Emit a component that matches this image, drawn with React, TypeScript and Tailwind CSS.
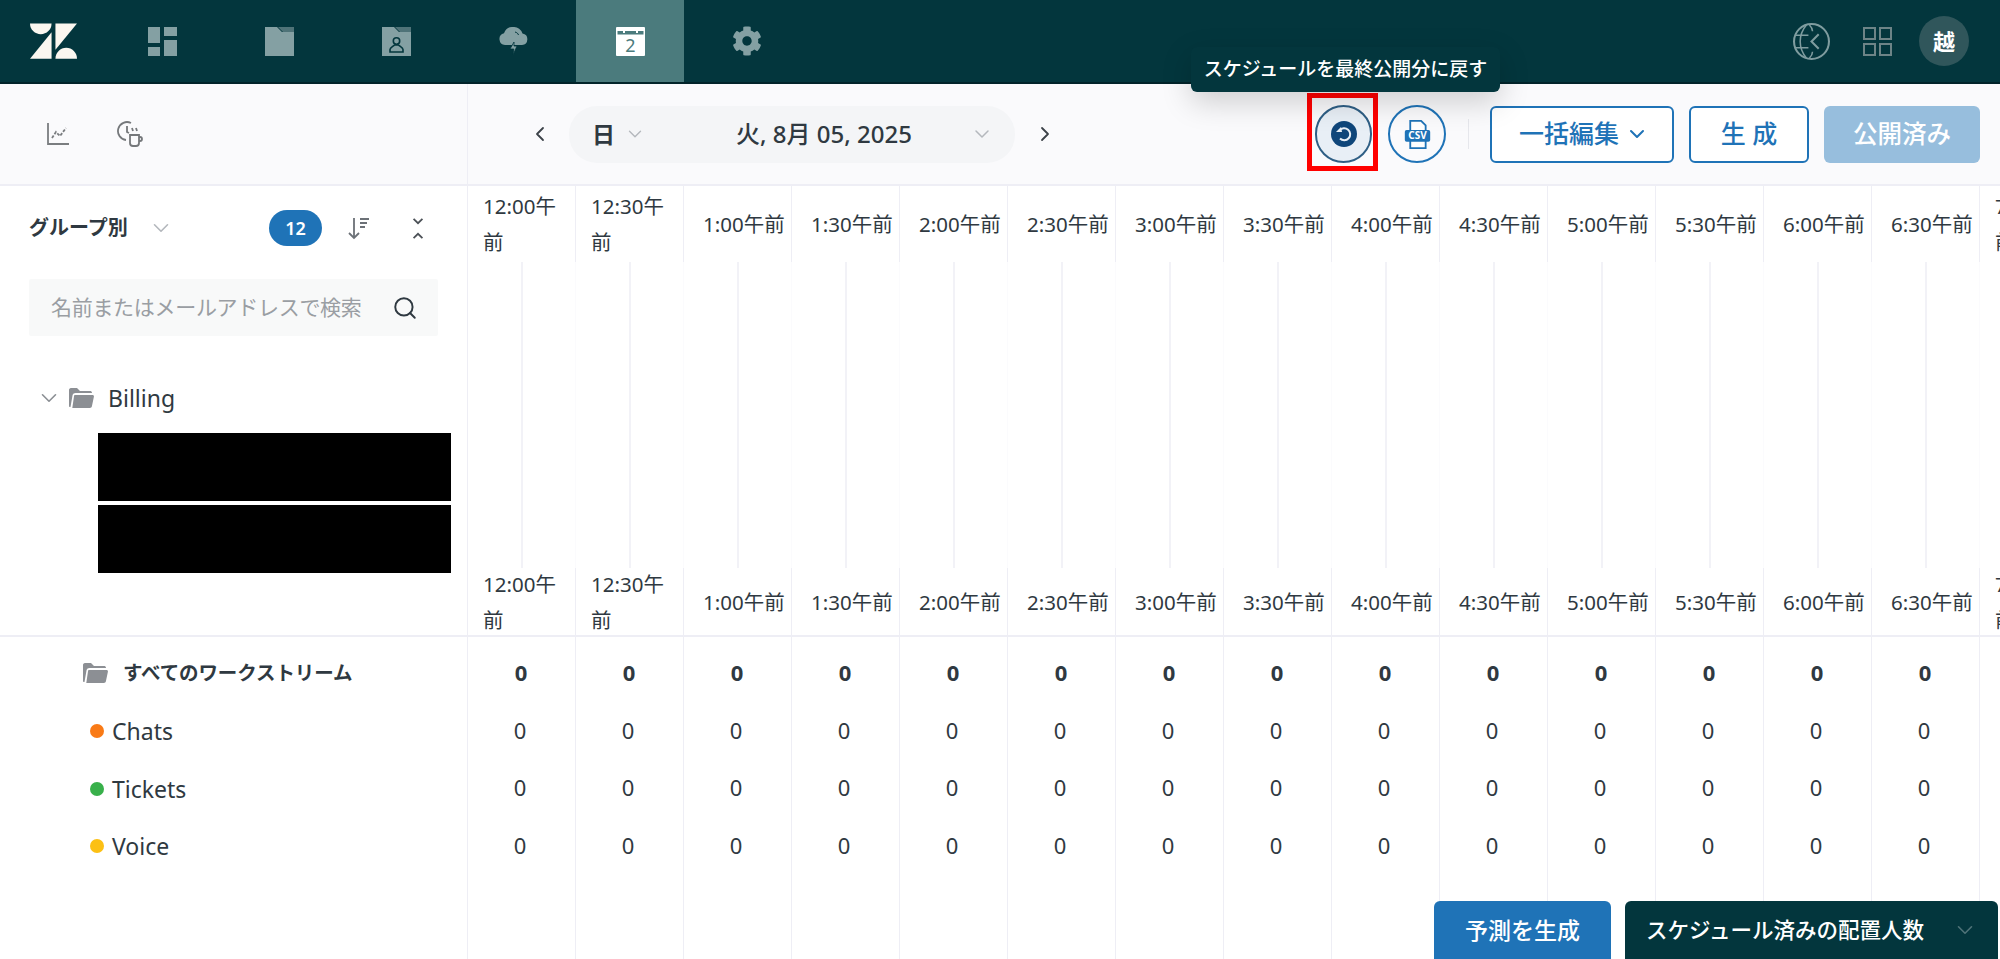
import { ChevronDown, ChevronLeft, ChevronRight, Search } from "lucide-react";
import { FaCog } from "react-icons/fa";

const hours = [
  ["12:00午", "前"],
  ["12:30午", "前"],
  ["1:00午前"],
  ["1:30午前"],
  ["2:00午前"],
  ["2:30午前"],
  ["3:00午前"],
  ["3:30午前"],
  ["4:00午前"],
  ["4:30午前"],
  ["5:00午前"],
  ["5:30午前"],
  ["6:00午前"],
  ["6:30午前"],
  ["7:00午", "前"],
];

const streams = [
  { name: "Chats", dot: "bg-[#f97a16]" },
  { name: "Tickets", dot: "bg-[#38b04a]" },
  { name: "Voice", dot: "bg-[#fcc014]" },
];

const HourLabel = ({ lines }: { lines: string[] }) => (
  <div
    className={`flex h-full flex-col justify-center text-[20.500px] leading-[36px] whitespace-nowrap text-[#2f3941] ${
      lines.length > 1 ? "pl-[15px]" : "pl-[19px]"
    }`}
  >
    {lines.map((line) => (
      <span key={line}>{line}</span>
    ))}
  </div>
);

const FolderOpen = ({ className }: { className: string }) => (
  <svg viewBox="0 0 25 20" className={className} fill="#8c8f94">
    <path d="M0 2c0-1 .6-2 2-2h6l3 3h10c1 0 2 .6 2 2H6.500C5 5 4 5.800 3.600 7L1.500 19H1c-.6 0-1-.5-1-1Z" />
    <path d="M6 7h17.500c1 0 1.600.8 1.400 1.800l-2 9.500c-.2 1-1 1.700-2 1.700H3.300L5 8.200C5.100 7.500 5.400 7 6 7Z" />
  </svg>
);

const NavTab = ({ children, active }: { children: React.ReactNode; active?: boolean }) => (
  <div className={`flex h-full w-[108px] items-center justify-center ${active ? "bg-[#4b7b7d]" : ""}`}>
    {children}
  </div>
);

const TopBar = () => (
  <div className="flex h-[84px] shrink-0 items-center border-b-2 border-[#02242a] bg-[#03363d]">
    <div className="flex w-[108px] justify-center pr-[2px]">
      <svg viewBox="0 0 48 36" className="h-[36px] w-[47px]" fill="#fbf7f0">
        <path d="M0 0H22A11 11 0 0 1 0 0Z" />
        <path d="M22 9V36H0Z" />
        <path d="M26 0H48L26 27Z" />
        <path d="M26 36A11 11 0 0 1 48 36Z" />
      </svg>
    </div>
    <div className="flex h-full gap-[9px]">
      <NavTab>
        <svg viewBox="0 0 29 29" className="h-[29px] w-[29px]" fill="#84a0a3">
          <rect width="12" height="16" />
          <rect y="20" width="12" height="9" />
          <rect x="16" width="13" height="9" />
          <rect x="16" y="13" width="13" height="16" />
        </svg>
      </NavTab>
      <NavTab>
        <svg viewBox="0 0 29 29" className="h-[29px] w-[29px]">
          <path d="M0 0H12L17 5H29V29H0Z" fill="#84a0a3" />
          <path d="M13 0H29V5H18Z" fill="#4f7378" />
        </svg>
      </NavTab>
      <NavTab>
        <svg viewBox="0 0 29 29" className="h-[29px] w-[29px]">
          <path d="M0 0H12L17 5H29V29H0Z" fill="#84a0a3" />
          <path d="M13 0H29V5H18Z" fill="#4f7378" />
          <circle cx="14.500" cy="14" r="3.200" fill="none" stroke="#03363d" strokeWidth="1.600" />
          <path d="M8 25v-2.500c0-2 3-3 4.500-4.500h4c1.500 1.500 4.500 2.500 4.500 4.500V25Z" fill="none" stroke="#03363d" strokeWidth="1.600" />
        </svg>
      </NavTab>
      <NavTab>
        <svg viewBox="0 0 29 28" className="h-[28px] w-[29px]" fill="#84a0a3">
          <path d="M6 18a6 6 0 0 1-1-11.800A9.500 9.500 0 0 1 14.500 0a9 9 0 0 1 9 6.500A5.800 5.800 0 0 1 23 18Z" />
          <path d="M16 5c2 .5 3 1.500 3.500 3" fill="none" stroke="#03363d" strokeWidth="1" />
          <path d="M15 15v4h3l-4 9 .8-6H11Z" stroke="#03363d" strokeWidth=".8" />
        </svg>
      </NavTab>
      <NavTab active>
        <svg viewBox="0 0 29 29" className="h-[29px] w-[29px]">
          <rect width="29" height="29" rx="1" fill="#fff" />
          <rect x="1.500" y="4" width="26" height="3.500" fill="#4b7b7d" />
          <rect x="7" y="0" width="2" height="6" fill="#fff" />
          <rect x="20" y="0" width="2" height="6" fill="#fff" />
          <text x="14.500" y="25" textAnchor="middle" fontSize="18" fill="#4b7b7d">
            2
          </text>
        </svg>
      </NavTab>
      <NavTab>
        <FaCog className="h-[30px] w-[30px] text-[#84a0a3]" />
      </NavTab>
    </div>
    <div className="ml-auto flex items-center pr-[31px]">
      <svg viewBox="0 0 36 36" className="h-[37px] w-[37px]" fill="none" stroke="#7f9c9f" strokeWidth="2">
        <circle cx="18" cy="18" r="17" />
        <path d="M25 11l-7 7 7 7" />
        <path d="M13 2C8 8 7 12 7 18s1 10 6 16M2 12h13M2 24h13M16 2c2 2 3 4 3 6M16 34c2-2 3-4 3-6" strokeWidth="1.500" />
      </svg>
      <svg viewBox="0 0 29 29" className="ml-[33px] h-[29px] w-[29px]" fill="none" stroke="#6d8487" strokeWidth="2">
        <rect x="1" y="1" width="11" height="11" />
        <rect x="17" y="1" width="11" height="11" />
        <rect x="1" y="17" width="11" height="11" />
        <rect x="17" y="17" width="11" height="11" />
      </svg>
      <div className="ml-[27px] flex h-[50px] w-[50px] items-center justify-center rounded-full bg-[#30565b] text-[22px] font-bold text-white">
        越
      </div>
    </div>
  </div>
);

const Toolbar = () => (
  <div className="flex h-[102px] shrink-0 border-b-2 border-[#eeeef5] bg-[#fafafc]">
    <div className="flex w-[468px] shrink-0 items-center border-r border-[#eeeef5] pl-[47px]">
      <svg viewBox="0 0 22 22" className="h-[22px] w-[22px]" fill="none" stroke="#7a7d80" strokeWidth="1.800">
        <path d="M1 0v21h21" />
        <path d="M5 15l4-6 4 4 6-8" strokeDasharray="3 1.500" />
      </svg>
      <svg viewBox="0 0 26 26" className="ml-[48px] h-[26px] w-[26px]" fill="none" stroke="#75787b" strokeWidth="1.800">
        <path d="M14 2A9 9 0 1 0 9 19" />
        <path d="M10 5v6l2 1" />
        <path d="M13 14h9v8a3 3 0 0 1-3 3h-3a3 3 0 0 1-3-3Z" />
        <path d="M22 16h1a2 2 0 0 1 0 4h-1" />
        <path d="M15 7l1 3M19 7l1 3" />
      </svg>
    </div>
    <div className="flex flex-1 items-center pr-[20px] pl-[60px]">
      <ChevronLeft className="h-[24px] w-[24px] text-[#3c4248]" strokeWidth={1.800} />
      <div className="ml-[17px] flex h-[57px] w-[446px] items-center rounded-[28px] bg-[#f4f5f7] pr-[21px] pl-[23px] text-[24px] font-medium text-[#2f3941]">
        <span className="w-[20px] text-[23px] font-bold">日</span>
        <ChevronDown className="ml-[12px] h-[22px] w-[22px] text-[#b4b8bd]" strokeWidth={1.500} />
        <span className="flex-1 pl-[32px] text-center whitespace-nowrap">火, 8月 05, 2025</span>
        <ChevronDown className="h-[24px] w-[24px] text-[#b4b8bd]" strokeWidth={1.500} />
      </div>
      <ChevronRight className="ml-[18px] h-[24px] w-[24px] text-[#3c4248]" strokeWidth={1.800} />

      <div className="relative ml-auto">
        <div className="absolute top-[-58px] left-[-124px] z-10 flex h-[45px] w-[309px] items-center justify-center rounded-[6px] bg-[#03363d] text-[19px] font-medium whitespace-nowrap text-white shadow-[0_10px_30px_rgba(0,0,0,0.18)]">
          スケジュールを最終公開分に戻す
        </div>
        <div className="absolute top-[-12px] left-[-8px] h-[78px] w-[71px] border-[5px] border-[#ff0000]" />
        <button className="flex h-[58px] w-[57px] items-center justify-center rounded-full border-2 border-[#2f5f85] bg-[#e8eff6]">
          <svg viewBox="0 0 26 26" className="h-[26px] w-[26px]">
            <circle cx="13" cy="13" r="13" fill="#0f467a" />
            <path d="M8.500 9.500A6 6 0 1 1 9 17.500" fill="none" stroke="#e8eff6" strokeWidth="2" />
            <path d="M5 11h6l-1-5Z" fill="#e8eff6" />
          </svg>
        </button>
      </div>
      <button className="ml-[16px] flex h-[58px] w-[58px] items-center justify-center rounded-full border-2 border-[#1f73b7] bg-[#fafafc]">
        <svg viewBox="0 0 32 32" className="h-[29px] w-[29px]">
          <path d="M8 1H20L25 6V12H8Z" fill="#fff" stroke="#1f73b7" strokeWidth="2" />
          <path d="M8 22H25V31H8Z" fill="#fff" stroke="#1f73b7" strokeWidth="2" />
          <rect x="2" y="11" width="28" height="13" rx="2" fill="#1f73b7" />
          <text x="16" y="21.500" textAnchor="middle" fontSize="11" fontWeight="700" fill="#fff">
            CSV
          </text>
        </svg>
      </button>
      <div className="ml-[22px] h-[30px] w-px bg-[#e6e7ec]" />
      <button className="ml-[21px] flex h-[57px] w-[184px] items-center justify-center gap-[6px] rounded-[6px] border-2 border-[#1f73b7] bg-white pl-[4px] text-[25px] font-medium text-[#1f73b7]">
        一括編集
        <ChevronDown className="h-[24px] w-[24px]" strokeWidth={2} />
      </button>
      <button className="ml-[15px] h-[57px] w-[120px] rounded-[6px] border-2 border-[#1f73b7] bg-white text-[25px] font-medium text-[#1f73b7]">
        生 成
      </button>
      <button className="ml-[15px] h-[57px] w-[156px] rounded-[6px] bg-[#97bedd] text-[24.500px] font-medium text-white">
        公開済み
      </button>
    </div>
  </div>
);

const GroupPanel = () => (
  <div className="w-[468px] shrink-0 border-r border-[#eeeef5] pt-[24px]">
    <div className="flex h-[36px] items-center pr-[40px] pl-[29px]">
      <span className="text-[20px] font-bold text-[#2f3941]">グループ別</span>
      <ChevronDown className="ml-[20px] h-[26px] w-[26px] text-[#b4b8bd]" strokeWidth={1.500} />
      <div className="ml-auto flex h-[36px] w-[53px] items-center justify-center rounded-full bg-[#1f73b7] text-[18px] font-semibold text-white">
        12
      </div>
      <svg viewBox="0 0 24 24" className="ml-[25px] h-[24px] w-[24px]" fill="none" stroke="#6c7177" strokeWidth="1.800">
        <path d="M7 2v20M2 17l5 5 5-5" />
        <path d="M13 3h9M13 7h7M13 11h5" />
      </svg>
      <svg viewBox="0 0 20 26" className="ml-[38px] h-[23px] w-[18px]" fill="none" stroke="#4c5157" strokeWidth="2">
        <path d="M5 2l5 5 5-5" />
        <path d="M5 24l5-5 5 5" />
      </svg>
    </div>
    <div className="mt-[33px] mr-[29px] ml-[29px] flex h-[57px] items-center rounded-[2px] bg-[#f8f9f9] pr-[20px] pl-[22px]">
      <span className="text-[21px] tracking-[-0.3px] whitespace-nowrap text-[#9a9ea3]">名前またはメールアドレスで検索</span>
      <Search className="ml-auto h-[26px] w-[26px] shrink-0 text-[#2f3941]" strokeWidth={1.800} />
    </div>
    <div className="mt-[47px] flex h-[30px] items-center pl-[36px]">
      <ChevronDown className="h-[26px] w-[26px] text-[#8b8f94]" strokeWidth={1.500} />
      <FolderOpen className="ml-[7px] h-[20px] w-[25px]" />
      <span className="ml-[14px] text-[23px] text-[#2f3941]">Billing</span>
    </div>
    <div className="mt-[20px] mr-[16px] ml-[98px] flex flex-col gap-[4px]">
      <div className="h-[68px] bg-black" />
      <div className="h-[68px] bg-black" />
    </div>
  </div>
);

const TotalsCell = ({ bold }: { bold?: boolean }) => (
  <div className={`flex h-[57.500px] items-center justify-center text-[22px] text-[#2f3941] ${bold ? "pr-[1px] font-bold" : "pr-[3px]"}`}>
    0
  </div>
);

export default function App() {
  return (
    <div className="relative flex h-[959px] w-[2000px] flex-col overflow-hidden bg-white font-['Noto_Sans','Noto_Sans_CJK_JP',sans-serif]">
      <TopBar />
      <Toolbar />

      <div className="flex h-[451px] shrink-0 border-b-2 border-[#eeeef5]">
        <GroupPanel />
        <div className="flex flex-1 overflow-hidden">
          {hours.map((lines) => (
            <div key={lines.join("")} className="flex w-[108px] shrink-0 flex-col">
              <div className="h-[76px] border-r border-[#eeeef5]">
                <HourLabel lines={lines} />
              </div>
              <div className="flex flex-1 justify-center border-r border-[#fbfbfd]">
                <div className="w-[2px] bg-[#f2f2f7]" />
              </div>
              <div className="h-[67px] border-r border-[#eeeef5]">
                <HourLabel lines={lines} />
              </div>
            </div>
          ))}
        </div>
      </div>

      <div className="flex flex-1">
        <div className="w-[468px] shrink-0 border-r border-[#eeeef5] pt-[7px]">
          <div className="flex h-[57.500px] items-center pl-[83px]">
            <FolderOpen className="h-[20px] w-[25px]" />
            <span className="ml-[15px] text-[19.500px] font-bold tracking-[-0.1px] text-[#2f3941]">すべてのワークストリーム</span>
          </div>
          {streams.map((stream) => (
            <div key={stream.name} className="flex h-[57.500px] items-center pt-[2px] pl-[90px]">
              <span className={`h-[14px] w-[14px] rounded-full ${stream.dot}`} />
              <span className="ml-[8px] text-[23px] text-[#2f3941]">{stream.name}</span>
            </div>
          ))}
        </div>
        <div className="flex flex-1 overflow-hidden">
          {hours.map((lines) => (
            <div key={lines.join("")} className="w-[108px] shrink-0 border-r border-[#eeeef5] pt-[7px]">
              <TotalsCell bold />
              <TotalsCell />
              <TotalsCell />
              <TotalsCell />
            </div>
          ))}
        </div>
      </div>

      <div className="absolute right-[2px] bottom-0 flex gap-[14px]">
        <button className="h-[58px] w-[177px] rounded-t-[6px] bg-[#1f73b7] text-[23px] font-medium text-white">
          予測を生成
        </button>
        <button className="flex h-[58px] w-[373px] items-center rounded-t-[6px] bg-[#03363d] pr-[20px] pl-[21px] text-[21.500px] font-medium whitespace-nowrap text-white">
          スケジュール済みの配置人数
          <ChevronDown className="ml-auto h-[26px] w-[26px] text-[#4f7378]" strokeWidth={1.500} />
        </button>
      </div>
    </div>
  );
}
